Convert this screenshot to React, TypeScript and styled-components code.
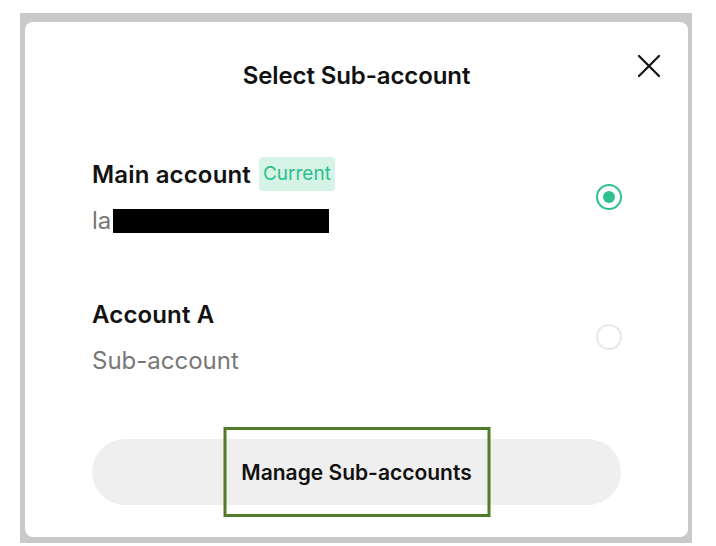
import React from "react";
import styled, { createGlobalStyle } from "styled-components";

const Global = createGlobalStyle`
  html, body { margin: 0; padding: 0; background: #ffffff; }
  body { font-family: Inter, "Open Sans", "Liberation Sans", sans-serif; }
`;

const Frame = styled.div`
  margin: 13px 0 0 20px;
  width: 672px;
  height: 530px;
  box-sizing: border-box;
  padding: 9px 4px 6px 5px;
  background: #c9c9c9;
  display: flex;
`;

const Card = styled.div`
  flex: 1;
  background: #ffffff;
  border-radius: 8px;
  display: flex;
  flex-direction: column;
`;

const Header = styled.div`
  display: grid;
  grid-template-columns: 1fr auto 1fr;
  align-items: center;
  padding: 30px 27px 0 27px;
  height: 46px;
`;

const Title = styled.h1`
  grid-column: 2;
  margin: 0;
  font-size: 24px;
  font-weight: 600;
  color: #111111;
  letter-spacing: -0.1px;
`;

const Close = styled.button`
  grid-column: 3;
  justify-self: end;
  align-self: start;
  margin-top: 2px;
  width: 24px;
  height: 24px;
  padding: 0;
  border: none;
  background: none;
  display: flex;
  cursor: pointer;
`;

const List = styled.div`
  display: flex;
  flex-direction: column;
  gap: 63px;
  padding: 59px 67px 0 67px;
`;

const Row = styled.div`
  display: flex;
  align-items: center;
  justify-content: space-between;
`;

const Info = styled.div`
  display: flex;
  flex-direction: column;
  gap: 17px;
`;

const NameLine = styled.div`
  display: flex;
  align-items: center;
  gap: 8px;
  height: 34px;
`;

const Name = styled.span`
  font-size: 24px;
  font-weight: 600;
  color: #121212;
  letter-spacing: 0.15px;
`;

const Badge = styled.span`
  background: #d6f3e7;
  color: #2dbf8c;
  font-size: 19px;
  line-height: 34px;
  padding: 0 4px;
  border-radius: 4px;
`;

const Sub = styled.div`
  display: flex;
  align-items: center;
  font-size: 24px;
  line-height: 26px;
  color: #777777;
`;

const Redacted = styled.span`
  display: inline-block;
  width: 216px;
  height: 24px;
  background: #000000;
  margin-left: 2px;
`;

const Radio = styled.span<{ $checked?: boolean }>`
  width: 26px;
  height: 26px;
  box-sizing: border-box;
  border-radius: 50%;
  border: 2px solid ${(p) => (p.$checked ? "#2ec18e" : "#e8e8e8")};
  display: flex;
  align-items: center;
  justify-content: center;
  margin: 3px -1px 0 0;
  &::after {
    content: "";
    display: ${(p) => (p.$checked ? "block" : "none")};
    width: 12px;
    height: 12px;
    border-radius: 50%;
    background: #2ec18e;
  }
`;

const Footer = styled.div`
  padding: 65px 67px 0 67px;
`;

const ManageButton = styled.button`
  position: relative;
  width: 100%;
  height: 66px;
  border: none;
  border-radius: 33px;
  background: #efefef;
  font-family: inherit;
  font-size: 21px;
  font-weight: 600;
  color: #111111;
  cursor: pointer;
`;

const Highlight = styled.span`
  position: absolute;
  left: 50%;
  top: -12px;
  width: 267px;
  height: 90px;
  transform: translateX(-50%);
  box-sizing: border-box;
  border: 3px solid #4f7b2b;
  pointer-events: none;
`;

export default function App() {
  return (
    <>
      <Global />
      <Frame>
        <Card>
          <Header>
            <Title>Select Sub-account</Title>
            <Close aria-label="Close">
              <svg width="24" height="24" viewBox="0 0 24 24" fill="none" stroke="#111" strokeWidth="2.2" strokeLinecap="round">
                <path d="M2 2 L22 22 M22 2 L2 22" />
              </svg>
            </Close>
          </Header>
          <List>
            <Row>
              <Info>
                <NameLine>
                  <Name>Main account</Name>
                  <Badge>Current</Badge>
                </NameLine>
                <Sub>
                  la<Redacted />
                </Sub>
              </Info>
              <Radio $checked />
            </Row>
            <Row>
              <Info>
                <NameLine>
                  <Name>Account A</Name>
                </NameLine>
                <Sub>Sub-account</Sub>
              </Info>
              <Radio />
            </Row>
          </List>
          <Footer>
            <ManageButton>
              Manage Sub-accounts
              <Highlight />
            </ManageButton>
          </Footer>
        </Card>
      </Frame>
    </>
  );
}
